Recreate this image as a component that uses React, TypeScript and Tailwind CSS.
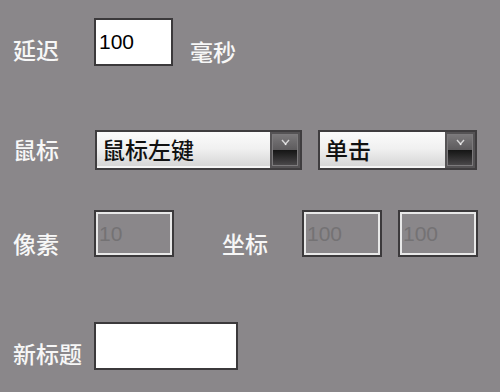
import React from 'react';

const cjk = "font-['Noto_Sans_CJK_SC',sans-serif]";
const latin = "font-['Liberation_Sans',Arial,sans-serif]";

function Label({ text, top, width }: { text: string; top: string; width: string }) {
  return (
    <div className={`${cjk} ${top} ${width} shrink-0 text-[23px] font-medium leading-[24px] text-[#f7f7f7]`}>
      {text}
    </div>
  );
}

function TextBox({ value, width, height, disabled }: { value: string; width: string; height: string; disabled?: boolean }) {
  if (disabled) {
    return (
      <div className={`${width} ${height} shrink-0 border-2 border-[#3b393b]`}>
        <div className="flex h-full items-center border-2 border-[#e8e8e8] pl-[1px]">
          <span className={`${latin} text-[21px] leading-none text-[#747274]`}>{value}</span>
        </div>
      </div>
    );
  }
  return (
    <div className={`${width} ${height} shrink-0 flex items-center border-2 border-[#3b393b] bg-white pl-[3px] pb-[2px]`}>
      <span className={`${latin} text-[21px] leading-none text-black`}>{value}</span>
    </div>
  );
}

function Combo({ value, width }: { value: string; width: string }) {
  return (
    <div className={`${width} h-[40px] shrink-0 flex border-2 border-[#3f3d3f] bg-[#4a484a]`}>
      <div className="flex flex-1 items-center bg-gradient-to-b from-[#fbfbfb] via-[#f0f0f0] to-[#d6d6d6] pl-[5px] border-b-2 border-[#f4f4f4]">
        <span className={`${cjk} text-[23px] font-medium leading-[24px] text-[#111]`}>{value}</span>
      </div>
      <div className="w-[30px] shrink-0 p-[2px] bg-[#555355]">
        <div className="flex h-full flex-col border border-[#7c7a7c]">
          <div className="flex h-1/2 items-center justify-center bg-gradient-to-b from-[#7a787a] to-[#5d5b5d]">
            <svg width="9" height="7" viewBox="0 0 9 7">
              <path d="M1 1 L4.5 5 L8 1" stroke="#d8d8d8" strokeWidth="1.4" fill="none" />
              <rect x="3.8" y="4.5" width="1.6" height="1.6" fill="#f0f0f0" />
            </svg>
          </div>
          <div className="h-1/2 bg-gradient-to-b from-[#151515] to-[#4a484a]" />
        </div>
      </div>
    </div>
  );
}

export default function App() {
  return (
    <div className="w-[500px] h-[392px] bg-[#8a878a] overflow-hidden pl-[13px]">
      <div className="flex items-start pt-[18px]">
        <Label text="延迟" top="mt-[19px]" width="w-[81px]" />
        <TextBox value="100" width="w-[79px]" height="h-[48px]" />
        <Label text="毫秒" top="mt-[21px] ml-[17px]" width="w-auto" />
      </div>

      <div className="flex items-start mt-[64px]">
        <Label text="鼠标" top="mt-[7px]" width="w-[82px]" />
        <Combo value="鼠标左键" width="w-[207px]" />
        <div className="w-[16px] shrink-0" />
        <Combo value="单击" width="w-[159px]" />
      </div>

      <div className="flex items-start mt-[40px]">
        <Label text="像素" top="mt-[21px]" width="w-[81px]" />
        <TextBox value="10" width="w-[80px]" height="h-[47px]" disabled />
        <div className="w-[48px] shrink-0" />
        <Label text="坐标" top="mt-[21px]" width="w-[80px]" />
        <TextBox value="100" width="w-[80px]" height="h-[47px]" disabled />
        <div className="w-[16px] shrink-0" />
        <TextBox value="100" width="w-[80px]" height="h-[47px]" disabled />
      </div>

      <div className="flex items-start mt-[65px]">
        <Label text="新标题" top="mt-[19px]" width="w-[81px]" />
        <TextBox value="" width="w-[144px]" height="h-[48px]" />
      </div>
    </div>
  );
}
